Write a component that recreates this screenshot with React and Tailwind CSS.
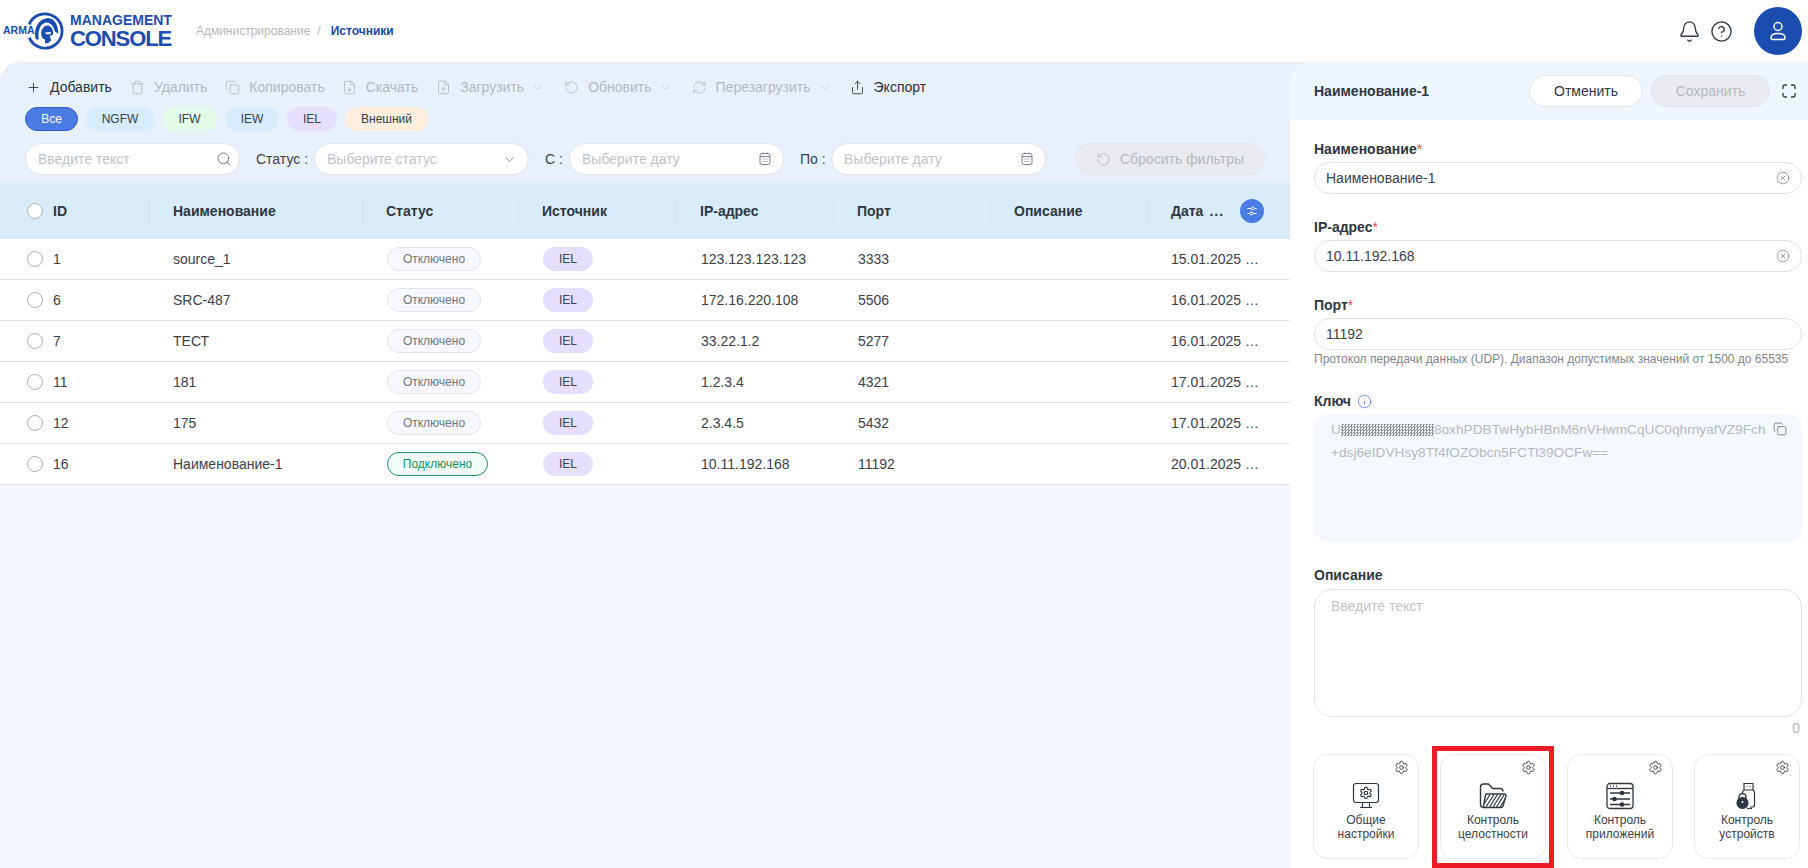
import {
  Plus, Trash, Copy, FileDown, FileUp, ChevronDown, RotateCcw, RefreshCw, Share, Search,
  Bell, CircleHelp, CircleX, Info, Settings,
} from 'lucide-react';

const rows = [
  { id: 1, name: 'source_1', on: false, ip: '123.123.123.123', port: 3333, date: '15.01.2025 …' },
  { id: 6, name: 'SRC-487', on: false, ip: '172.16.220.108', port: 5506, date: '16.01.2025 …' },
  { id: 7, name: 'ТЕСТ', on: false, ip: '33.22.1.2', port: 5277, date: '16.01.2025 …' },
  { id: 11, name: '181', on: false, ip: '1.2.3.4', port: 4321, date: '17.01.2025 …' },
  { id: 12, name: '175', on: false, ip: '2.3.4.5', port: 5432, date: '17.01.2025 …' },
  { id: 16, name: 'Наименование-1', on: true, ip: '10.11.192.168', port: 11192, date: '20.01.2025 …' },
];

const gridCols = 'grid grid-cols-[149px_213px_156px_158px_157px_157px_157px_143px]';

function Logo() {
  return (
    <div className="flex items-center text-[#1b4db1] ml-[3px]">
      <span className="relative z-10 w-[23px] text-[10.5px] font-bold whitespace-nowrap">ARMA</span>
      <svg width="38" height="38" viewBox="0 0 40 40" className="shrink-0">
        <path d="M3.4 13 A18 18 0 1 1 3.4 27" fill="none" stroke="#1b4db1" strokeWidth="3" />
        <path d="M10.5 29 C7 17 14 6 24 6.5 C30 7 34 13 34 23 L30.5 20.5 C29 15 26 11 21.5 11 C16 11.5 12 18 13.5 29 Z" fill="#1b4db1" />
        <path d="M16 23 C16 17 20 13.5 24 14.5 C27 15.5 29 19 28.5 24 L25 25 L26.5 30 L23 33 L20 33 L20 29 C17.5 28.5 16 26 16 23 Z" fill="#1b4db1" />
        <path d="M20 21.5 L26.5 21 L25.5 23.5 L21 23.5 Z" fill="#ffffff" />
      </svg>
      <div className="ml-[6px] flex flex-col font-bold">
        <span className="text-[14px] leading-[15px]">MANAGEMENT</span>
        <span className="text-[22px] leading-[21px] tracking-[-1.1px]">CONSOLE</span>
      </div>
    </div>
  );
}

function Header() {
  return (
    <header className="h-[62px] flex items-center pr-[6px] bg-white">
      <Logo />
      <div className="ml-[24px] flex items-center gap-[7px] text-xs text-[#b4b8bd]">
        <span>Администрирование</span>
        <span>/</span>
        <span className="font-bold text-[#1c4aa6] ml-[3px]">Источники</span>
      </div>
      <div className="ml-auto flex items-center">
        <Bell size={23} strokeWidth={1.4} className="text-[#2f3742]" />
        <CircleHelp size={23} strokeWidth={1.4} className="text-[#2f3742] ml-[9px]" />
        <div className="ml-[21px] w-12 h-12 rounded-full bg-[#1b4db1] flex items-center justify-center">
          <svg width="24" height="24" viewBox="0 0 24 24" fill="none" stroke="#fff" strokeWidth="1.5">
            <circle cx="12" cy="7.5" r="4" />
            <path d="M5 18.5C5 15.5 8 14.5 12 14.5C16 14.5 19 15.5 19 18.5C19 19.5 18.5 20.5 17.5 20.5H6.5C5.5 20.5 5 19.5 5 18.5Z" />
          </svg>
        </div>
      </div>
    </header>
  );
}

function ToolBtn({ icon: Icon, label, active, caret, ml }) {
  return (
    <div className={`flex items-center ${ml} ${active ? 'text-[#2b323c]' : 'text-[#b4b8be]'}`}>
      <Icon size={15} strokeWidth={1.4} className="mr-[9px]" />
      <span className="text-sm leading-5">{label}</span>
      {caret && <ChevronDown size={13} strokeWidth={1.3} className="ml-[7px]" />}
    </div>
  );
}

function Chip({ children, className }) {
  return (
    <span className={`h-6 rounded-full flex items-center justify-center text-xs ${className}`}>
      {children}
    </span>
  );
}

function CalendarIcon() {
  return (
    <svg width="14" height="14" viewBox="0 0 14 14" fill="none" stroke="#7c838c" strokeWidth="1">
      <rect x="2" y="1.5" width="10" height="11" rx="2" />
      <path d="M2 4.5H12M5 0.5V2M9 0.5V2" />
      <path d="M4.5 7H5.5M6.5 7H7.5M8.5 7H9.5M4.5 9.5H5.5M6.5 9.5H7.5M8.5 9.5H9.5" />
    </svg>
  );
}

function FilterBox({ placeholder, width, pr = 'pr-[11px]', children }) {
  return (
    <div className={`h-8 ${width} bg-white border border-[#e1e4e8] rounded-full flex items-center justify-between pl-[12px] ${pr} text-sm text-[#c0c4c9]`}>
      <span>{placeholder}</span>
      {children}
    </div>
  );
}

function Radio() {
  return <span className="w-4 h-4 rounded-full border border-[#a9aeb5] bg-white block shrink-0" />;
}

function Table() {
  const heads = ['Наименование', 'Статус', 'Источник', 'IP-адрес', 'Порт', 'Описание'];
  return (
    <div>
      <div className={`${gridCols} h-[56px] bg-[#d9ecfb] border-b border-[#dfe5ea] text-sm font-bold text-[#2e3641]`}>
        <div className="flex items-center pl-[27px] gap-[10px]">
          <Radio />
          <span>ID</span>
        </div>
        {heads.map((h) => (
          <div key={h} className="flex items-center">
            <span className="w-px h-[28px] bg-[#cfe3f3] mr-[23px]" />
            <span>{h}</span>
          </div>
        ))}
        <div className="flex items-center">
          <span className="w-px h-[28px] bg-[#cfe3f3] mr-[23px]" />
          <span>Дата</span>
          <span className="ml-[6px] tracking-[1px]">...</span>
          <span className="ml-auto mr-[26px] w-6 h-6 rounded-full bg-[#4b7be5] flex items-center justify-center">
            <svg width="12" height="12" viewBox="0 0 12 12" fill="none" stroke="#fff" strokeWidth="1">
              <path d="M1.5 3.5H5M8.5 3.5H10.5M1.5 8.5H3.5M7 8.5H10.5" />
              <circle cx="6.7" cy="3.5" r="1.4" />
              <circle cx="5.2" cy="8.5" r="1.4" />
            </svg>
          </span>
        </div>
      </div>
      {rows.map((r) => (
        <div key={r.id} className={`${gridCols} h-[41px] bg-white border-b border-[#dfe3e7] text-sm text-[#3a414b]`}>
          <div className="flex items-center pl-[27px] gap-[10px]">
            <Radio />
            <span>{r.id}</span>
          </div>
          <div className="flex items-center pl-[24px]">{r.name}</div>
          <div className="flex items-center pl-[25px]">
            {r.on ? (
              <span className="h-6 w-[101px] rounded-full border border-[#14935f] bg-[#f2fdf7] text-[#14935f] text-xs flex items-center justify-center">Подключено</span>
            ) : (
              <span className="h-6 w-[94px] rounded-full border border-[#e0e4ea] bg-[#f6f8fd] text-[#6f767f] text-xs flex items-center justify-center">Отключено</span>
            )}
          </div>
          <div className="flex items-center pl-[25px]">
            <span className="h-6 w-[50px] rounded-full bg-[#e5defc] text-xs text-[#3d4450] flex items-center justify-center">IEL</span>
          </div>
          <div className="flex items-center pl-[25px]">{r.ip}</div>
          <div className="flex items-center pl-[25px]">{r.port}</div>
          <div />
          <div className="flex items-center pl-[24px]">{r.date}</div>
        </div>
      ))}
    </div>
  );
}

function LeftPanel() {
  return (
    <section className="w-[1290px] shrink-0 rounded-tl-[20px] bg-[#f4f8fe] flex flex-col overflow-hidden">
      <div className="bg-[#e8f1fb] pt-[15px] h-[121px]">
        <div className="flex items-center h-5 pl-[26px]">
          <ToolBtn icon={Plus} label="Добавить" active />
          <ToolBtn icon={Trash} label="Удалить" ml="ml-[18px]" />
          <ToolBtn icon={Copy} label="Копировать" ml="ml-[18px]" />
          <ToolBtn icon={FileDown} label="Скачать" ml="ml-[17px]" />
          <ToolBtn icon={FileUp} label="Загрузить" caret ml="ml-[18px]" />
          <ToolBtn icon={RotateCcw} label="Обновить" caret ml="ml-[20px]" />
          <ToolBtn icon={RefreshCw} label="Перезагрузить" caret ml="ml-[20px]" />
          <ToolBtn icon={Share} label="Экспорт" active ml="ml-[19px]" />
        </div>
        <div className="flex items-center gap-2 pl-[25px] mt-[10px]">
          <Chip className="w-[53px] bg-[#4b7be5] border border-[#2f5fc8] text-white">Все</Chip>
          <Chip className="w-[68px] bg-[#d6ecff] text-[#33404e]">NGFW</Chip>
          <Chip className="w-[55px] bg-[#e3fbe9] text-[#33404e]">IFW</Chip>
          <Chip className="w-[54px] bg-[#d6ecff] text-[#33404e]">IEW</Chip>
          <Chip className="w-[50px] bg-[#e5defc] text-[#33404e]">IEL</Chip>
          <Chip className="w-[83px] bg-[#ffeedd] text-[#33404e]">Внешний</Chip>
        </div>
        <div className="flex items-center pl-[25px] mt-3 text-sm text-[#3a414b]">
          <FilterBox placeholder="Введите текст" width="w-[215px]" pr="pr-[7px]">
            <Search size={16} strokeWidth={1.3} className="text-[#5f6670]" />
          </FilterBox>
          <span className="ml-4 w-[58px]">Статус :</span>
          <FilterBox placeholder="Выберите статус" width="w-[215px]">
            <ChevronDown size={15} strokeWidth={1.3} className="text-[#7c838c]" />
          </FilterBox>
          <span className="ml-4 w-[24px]">С :</span>
          <FilterBox placeholder="Выберите дату" width="w-[215px]"><CalendarIcon /></FilterBox>
          <span className="ml-[16px] w-[31px]">По :</span>
          <FilterBox placeholder="Выберите дату" width="w-[215px]"><CalendarIcon /></FilterBox>
          <div className="ml-[29px] h-8 w-[190px] rounded-full bg-[#e9ebee] border border-[#e1e4e8] text-[#b4b8be] flex items-center justify-center gap-[9px]">
            <RotateCcw size={15} strokeWidth={1.4} />
            <span>Сбросить фильтры</span>
          </div>
        </div>
      </div>
      <Table />
    </section>
  );
}

function Field({ label, required, value, clear, children }) {
  return (
    <div>
      <div className="h-5 text-sm font-bold leading-5 text-[#2e3641]">
        {label}
        {required && <span className="font-normal text-[#ee4d4d]">*</span>}
      </div>
      <div className="mt-[3px] h-8 rounded-full border border-[#e1e3e6] bg-white flex items-center justify-between pl-[11px] pr-[11px] text-sm text-[#3a414b]">
        <span>{value}</span>
        {clear && <CircleX size={14} strokeWidth={1.2} className="text-[#6f767f]" />}
      </div>
      {children}
    </div>
  );
}

// маленькие иконки для плиток настроек
function MonitorIcon() {
  return (
    <svg width="28" height="28" viewBox="0 0 28 28" fill="none" stroke="#2f3742" strokeWidth="1.2">
      <rect x="1.5" y="1.5" width="25" height="19" rx="2.5" />
      <path d="M10.5 20.5V25M17.5 20.5V25M8 25.5H20" />
      <g transform="translate(7 4) scale(0.58)">
        <path d="M12.22 2h-.44a2 2 0 0 0-2 2v.18a2 2 0 0 1-1 1.73l-.43.25a2 2 0 0 1-2 0l-.15-.08a2 2 0 0 0-2.73.73l-.22.38a2 2 0 0 0 .73 2.73l.15.1a2 2 0 0 1 1 1.72v.51a2 2 0 0 1-1 1.74l-.15.09a2 2 0 0 0-.73 2.73l.22.38a2 2 0 0 0 2.73.73l.15-.08a2 2 0 0 1 2 0l.43.25a2 2 0 0 1 1 1.73V20a2 2 0 0 0 2 2h.44a2 2 0 0 0 2-2v-.18a2 2 0 0 1 1-1.73l.43-.25a2 2 0 0 1 2 0l.15.08a2 2 0 0 0 2.73-.73l.22-.39a2 2 0 0 0-.73-2.73l-.15-.08a2 2 0 0 1-1-1.74v-.5a2 2 0 0 1 1-1.74l.15-.09a2 2 0 0 0 .73-2.73l-.22-.38a2 2 0 0 0-2.73-.73l-.15.08a2 2 0 0 1-2 0l-.43-.25a2 2 0 0 1-1-1.73V4a2 2 0 0 0-2-2z" strokeWidth="2" />
        <circle cx="12" cy="12" r="3" strokeWidth="2" />
      </g>
    </svg>
  );
}

function FolderIcon() {
  return (
    <svg width="28" height="28" viewBox="0 0 28 28" fill="none" stroke="#2f3742" strokeWidth="1.4">
      <path d="M6 25.5H4.5a3 3 0 0 1-3-3V5a3 3 0 0 1 3-3h5l4 4.5H21a3 3 0 0 1 3 3" strokeLinejoin="round" />
      <path d="M8 12H25.5a1.5 1.5 0 0 1 1.4 2L24 24a2 2 0 0 1-2 1.5H6a1.5 1.5 0 0 1-1.4-2L6.5 13a1.5 1.5 0 0 1 1.5-1z" fill="#fff" />
      <path d="M7 25L15 12.5M10.5 25L18.5 12.5M14 25L22 12.5M17.5 25L25 13M21 25L26.5 16.5M5 22L11 12.5" strokeWidth="1.2" />
    </svg>
  );
}

function AppsIcon() {
  return (
    <svg width="28" height="28" viewBox="0 0 28 28" fill="none" stroke="#2f3742" strokeWidth="1.3">
      <rect x="1" y="1.5" width="26" height="25" rx="3" />
      <path d="M1 6.5H27" />
      <path d="M4 4H5M7 4H8M10 4H11" strokeWidth="1.4" />
      <path d="M4 11H24M4 17H24M4 22.5H24" />
      <circle cx="16" cy="11" r="1.7" fill="#2f3742" />
      <circle cx="8.5" cy="17" r="1.7" fill="#2f3742" />
      <circle cx="16" cy="22.5" r="1.7" fill="#2f3742" />
    </svg>
  );
}

function UsbIcon() {
  return (
    <svg width="28" height="28" viewBox="0 0 28 28" fill="none" stroke="#2f3742" strokeWidth="1.2">
      <path d="M11 8V1.5H20V8" />
      <path d="M13.5 4.5H14.5M16.5 4.5H17.5" />
      <path d="M9.5 12V10.5a2.5 2.5 0 0 1 2-2.5H19.5a2.5 2.5 0 0 1 2 2.5V23a2 2 0 0 1-2 2H17" />
      <path d="M14 26.5H19" />
      <path d="M6 17V15a3.5 3.5 0 0 1 7 0V17" strokeWidth="1.5" />
      <circle cx="9.5" cy="21" r="5.5" fill="#2f3742" />
      <circle cx="9.5" cy="20" r="1" fill="#fff" stroke="none" />
    </svg>
  );
}

function Tile({ icon, top, bottom, marked }) {
  const tile = (
    <div className="relative w-[106px] h-[105px] rounded-[14px] border border-[#e8eaed] bg-white flex flex-col items-center pt-[27px]">
      <Settings size={15} strokeWidth={1.4} className="absolute top-[5px] right-[9px] text-[#2f3742]" />
      {icon}
      <div className="mt-[3px] text-center text-xs leading-[14px] text-[#3a414b]">
        {top}
        <br />
        {bottom}
      </div>
    </div>
  );
  if (!marked) return tile;
  return (
    <div className="relative">
      {tile}
      <span className="absolute -left-[8px] -right-[8px] -top-[8px] -bottom-[9px] border-[5px] border-[#ed1c24] pointer-events-none" />
    </div>
  );
}

function RightPanel() {
  return (
    <section className="flex-1 min-w-0 bg-[#e8f1fb] flex flex-col">
      <div className="h-[58px] rounded-tl-[20px] bg-[#eff6fe] flex items-center pl-6 pr-[12px]">
        <span className="text-sm font-bold text-[#2e3641]">Наименование-1</span>
        <button className="ml-auto w-[114px] h-8 rounded-full border border-[#e1e4e8] bg-white text-sm text-[#2f3742]">Отменить</button>
        <button className="ml-2 w-[119px] h-8 rounded-full border border-[#e1e4e8] bg-[#e9ebee] text-sm text-[#b4b8be]">Сохранить</button>
        <svg className="ml-[12px]" width="14" height="14" viewBox="0 0 14 14" fill="none" stroke="#2f3742" strokeWidth="1.3" strokeLinecap="round">
          <path d="M1 4.5V3a2 2 0 0 1 2-2H4.5M9.5 1H11a2 2 0 0 1 2 2V4.5M13 9.5V11a2 2 0 0 1-2 2H9.5M4.5 13H3a2 2 0 0 1-2-2V9.5" />
        </svg>
      </div>
      <div className="flex-1 bg-white pl-6 pr-[6px] pt-[19px]">
        <Field label="Наименование" required value="Наименование-1" clear />
        <div className="mt-[23px]">
          <Field label="IP-адрес" required value="10.11.192.168" clear />
        </div>
        <div className="mt-[23px]">
          <Field label="Порт" required value="11192">
            <div className="mt-px h-4 text-xs leading-4 text-[#80868e] whitespace-nowrap">
              Протокол передачи данных (UDP). Диапазон допустимых значений от 1500 до 65535
            </div>
          </Field>
        </div>
        <div className="mt-[24px] h-5 flex items-center text-sm font-bold text-[#2e3641]">
          Ключ
          <Info size={15} strokeWidth={1.3} className="ml-[6px] text-[#4b7be5]" />
        </div>
        <div className="relative mt-[3px] h-[128px] rounded-[14px] bg-[#f5f8fe] pl-[17px] pt-[4px] text-[13.7px] leading-[23px] text-[#b4b9c1]">
          <div className="flex items-center whitespace-nowrap">
            U
            <span className="inline-block w-[93px] h-[12px] bg-[repeating-conic-gradient(#8e9299_0_25%,#f5f8fe_0_50%)] bg-[length:3px_3px]" />
            8oxhPDBTwHybHBnM6nVHwmCqUC0qhrnyafVZ9Fch
          </div>
          <div>+dsj6eIDVHsy8Tf4fOZObcn5FCTl39OCFw==</div>
          <Copy size={14} strokeWidth={1.3} className="absolute top-[8px] right-[15px] text-[#5f6670]" />
        </div>
        <div className="mt-[23px] h-5 text-sm font-bold leading-5 text-[#2e3641]">Описание</div>
        <div className="mt-[4px] h-[128px] rounded-[18px] border border-[#e1e3e6] bg-white pl-[16px] pt-[6px] text-sm text-[#c0c4c9]">Введите текст</div>
        <div className="mt-[3px] h-4 text-right text-sm leading-4 text-[#b4b8be] pr-[2px]">0</div>
        <div className="mt-[18px] flex gap-[21px] -ml-px">
          <Tile icon={<MonitorIcon />} top="Общие" bottom="настройки" />
          <Tile icon={<FolderIcon />} top="Контроль" bottom="целостности" marked />
          <Tile icon={<AppsIcon />} top="Контроль" bottom="приложений" />
          <Tile icon={<UsbIcon />} top="Контроль" bottom="устройств" />
        </div>
      </div>
    </section>
  );
}

export default function App() {
  return (
    <div className="w-[1808px] h-[868px] overflow-hidden bg-white [font-family:Liberation_Sans,sans-serif] flex flex-col">
      <Header />
      <main className="flex-1 flex min-h-0">
        <LeftPanel />
        <RightPanel />
      </main>
    </div>
  );
}
